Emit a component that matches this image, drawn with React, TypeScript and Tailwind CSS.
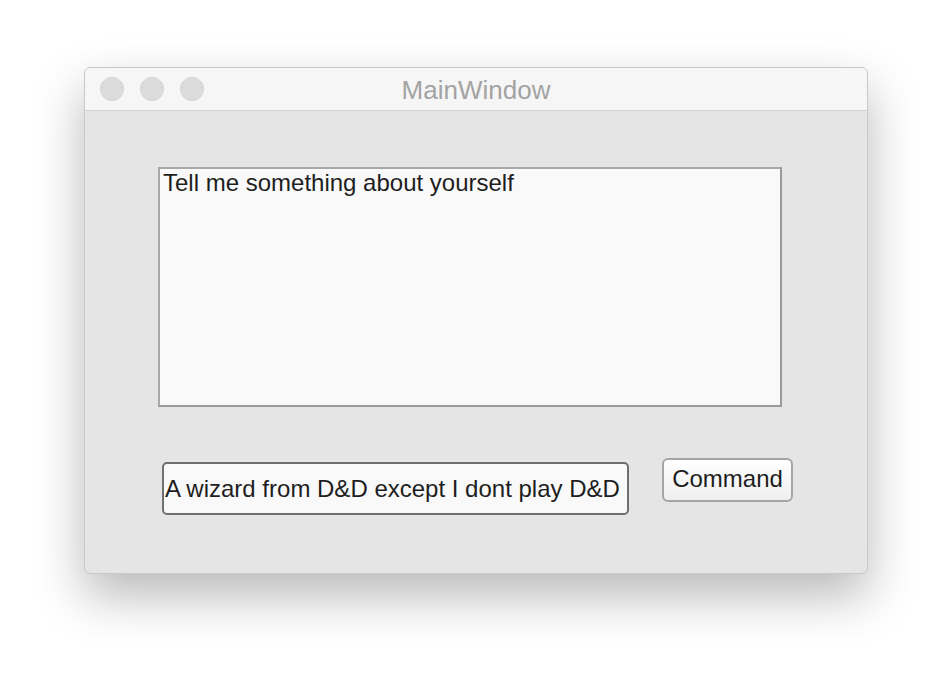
export default function App() {
  return (
    <div className="w-[952px] h-[674px] bg-white pl-[84px] pt-[67px]" style={{ fontFamily: '"Liberation Sans", Arial, sans-serif' }}>
      <div className="w-[784px] h-[507px] rounded-[6px] bg-[#e5e5e5] border border-[#c8c8c8] shadow-[0_22px_50px_rgba(0,0,0,0.28)] overflow-hidden flex flex-col">
        {/* title bar */}
        <div className="h-[43px] bg-[#f6f6f6] border-b border-[#d3d3d3] flex items-center relative shrink-0">
          <div className="flex gap-[16px] pl-[15px]">
            <span className="w-[24px] h-[24px] rounded-full bg-[#dcdcdc] border border-[#d0d0d0]" />
            <span className="w-[24px] h-[24px] rounded-full bg-[#dcdcdc] border border-[#d0d0d0]" />
            <span className="w-[24px] h-[24px] rounded-full bg-[#dcdcdc] border border-[#d0d0d0]" />
          </div>
          <div className="absolute inset-0 flex items-center justify-center pt-[3px] text-[26px] text-[#a3a3a3] pointer-events-none">
            MainWindow
          </div>
        </div>

        {/* content */}
        <div className="flex flex-col pl-[73px] pt-[56px]">
          <div className="w-[624px] h-[240px] bg-[#f9f9f9] border-2 border-t-[#a8a8a8] border-l-[#a8a8a8] border-r-[#9a9a9a] border-b-[#9a9a9a] pl-[3px] pt-[1px] text-[24px] leading-[26px] text-[#1e1e1e]">
            Tell me something about yourself
          </div>
          <div className="flex items-start mt-[51px] pl-[4px]">
            <div className="w-[467px] h-[53px] mt-[4px] rounded-[5px] bg-[#f9f9f9] border-2 border-[#6f6f6f] flex items-center pl-[1px] text-[24px] text-[#1e1e1e] whitespace-nowrap">
              A wizard from D&amp;D except I dont play D&amp;D
            </div>
            <button className="ml-[33px] w-[131px] h-[44px] rounded-[6px] border-2 border-[#a5a5a5] bg-gradient-to-b from-white to-[#efefef] text-[24px] text-[#1e1e1e] flex items-center justify-center pb-[2px]">
              Command
            </button>
          </div>
        </div>
      </div>
    </div>
  );
}
